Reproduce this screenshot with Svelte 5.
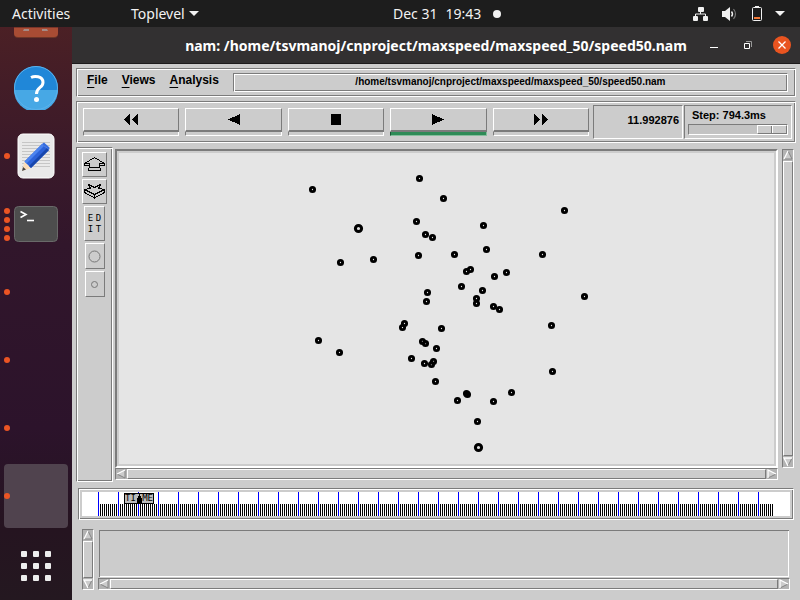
<script>
  const controls = [
    { label: 'Fast rewind', d: 'M0 5.5L6 0V11ZM8 5.5L14 0V11Z', w: 14 },
    { label: 'Play backward', d: 'M0 5.5L12 0V11Z', w: 12 },
    { label: 'Stop', d: 'M0 0H10V11H0Z', w: 10 },
    { label: 'Play forward', d: 'M12 5.5L0 0V11Z', w: 12, active: true },
    { label: 'Fast forward', d: 'M6 5.5L0 0V11ZM14 5.5L8 0V11Z', w: 14 }
  ];

  // Node positions on the simulation canvas: x, y
  const nodes = [
    [193, 36], [300, 25], [324, 45], [297, 68], [306, 81], [313, 84], [221, 109], [254, 106],
    [299, 102], [364, 72], [445, 57], [335, 101], [367, 96], [423, 101], [351, 116], [347, 118],
    [387, 119], [375, 123], [342, 133], [363, 137], [357, 145], [357, 150], [374, 153], [380, 156],
    [465, 143], [432, 172], [308, 139], [307, 148], [285, 170], [283, 174], [322, 175], [303, 188],
    [306, 190], [317, 195], [292, 205], [305, 210], [314, 208], [312, 211], [316, 228], [199, 187],
    [220, 199], [338, 247], [347, 240], [348, 241], [374, 248], [392, 239], [433, 218], [358, 268]
  ];
  const bigNodes = [[239, 75], [359, 294]];

  const majorTicks = Array.from({ length: 34 }, (_, i) => i * 20);
  let step = $state(100);
  const arrows = {
    up: ['M5 1L1 9', 'M5 1L9 9H1', 'M5 1L9 9H1Z'],
    down: ['M5 9L1 1H9', 'M9 1L5 9', 'M5 9L1 1H9Z'],
    left: ['M9 1L1 5', 'M1 5L9 9V1', 'M1 5L9 1V9Z'],
    right: ['M1 9V1L9 5', 'M9 5L1 9', 'M9 5L1 1V9Z']
  };
</script>

{#snippet arrow(dir)}
  <button class="arrow" aria-label="Scroll {dir}">
    <svg width="10" height="10" viewBox="0 0 10 10">
      <path d={arrows[dir][2]} fill="#ccc" />
      <path d={arrows[dir][1]} fill="none" stroke="#858585" />
      <path d={arrows[dir][0]} fill="none" stroke="#fff" stroke-width="1.3" />
    </svg>
  </button>
{/snippet}

{#snippet vscroll()}
  <div class="scroll vertical">{@render arrow('up')}<div class="thumb"></div>{@render arrow('down')}</div>
{/snippet}

{#snippet hscroll()}
  <div class="scroll">{@render arrow('left')}<div class="thumb"></div>{@render arrow('right')}</div>
{/snippet}

<div class="desktop">
  <header class="topbar">
    <button class="activities">Activities</button>
    <button class="appmenu">Toplevel
      <svg width="10" height="5" viewBox="0 0 10 5"><path d="M0 0H10L5 5Z" fill="#f2f2f2" /></svg>
    </button>
    <button class="clock"><span>Dec 31</span><span>19:43</span><i></i></button>
    <button class="status" aria-label="System menu">
      <svg width="16" height="14" viewBox="0 0 16 14" fill="#f2f2f2">
        <rect x="5" width="6" height="5" rx="1" /><rect y="9" width="5" height="5" rx="1" /><rect x="10" y="9" width="5" height="5" rx="1" />
        <path d="M7.5 4V7M2.5 10V7H12.5V10" fill="none" stroke="#f2f2f2" />
      </svg>
      <svg class="speaker" width="16" height="14" viewBox="0 0 16 14">
        <path d="M1 4H4L9 0V14L4 10H1Z" fill="#f2f2f2" />
        <path d="M10.500 4.500Q12.500 7 10.500 9.500" fill="none" stroke="#f2f2f2" stroke-width="1.400" />
        <path d="M12.500 2Q16.500 7 12.500 12" fill="none" stroke="#777" stroke-width="1.200" />
      </svg>
      <svg class="battery" width="10" height="15" viewBox="0 0 10 15">
        <path d="M3 0H7V2H3Z" fill="#f2f2f2" /><rect x=".5" y="1.5" width="9" height="13" rx="1" fill="none" stroke="#f2f2f2" />
        <path d="M2 11H8V13H2Z" fill="#f47836" />
      </svg>
      <svg width="10" height="5" viewBox="0 0 10 5"><path d="M0 0H10L5 5Z" fill="#f2f2f2" /></svg>
    </button>
  </header>

  <div class="body">
    <nav class="dock" aria-label="Dock">
      <button class="app first" aria-label="Software">
        <svg width="44" height="11" viewBox="0 0 44 11">
          <path d="M0 0H44V7Q44 11 40 11H4Q0 11 0 7Z" fill="#6e3527" /><path d="M0 0H44V6Q44 10 40 10H4Q0 10 0 6Z" fill="#a84c34" />
          <path d="M0 0H44V1H0Z" fill="#7c3529" /><path d="M10 2H15V4H9ZM28 2H33L34 4H28Z" fill="#a68a86" />
        </svg>
      </button>
      <button class="app" aria-label="Help">
        <svg width="44" height="44" viewBox="0 0 44 44">
          <circle cx="22" cy="22" r="22" fill="#2087d8" /><path d="M0 24H44A22 22 0 0 1 0 24Z" fill="#47a8e5" />
          <circle cx="22" cy="22" r="21.5" fill="none" stroke="#5cb2eb" />
          <path d="M17 11.5C20 10 29 9.500 29 16.500C29 22 22.500 21 22.500 28" fill="none" stroke="#fff" stroke-width="3" />
          <circle cx="22.500" cy="33.500" r="2.500" fill="#fff" />
        </svg>
      </button>
      <button class="app" aria-label="Text Editor">
        <span class="marks"><i></i></span>
        <svg width="38" height="46" viewBox="0 0 38 46">
          <rect x="1" y="1" width="36" height="44" rx="5" fill="#e9e9e9" stroke="#fff" />
          <path d="M5 9.500H33M5 12.500H33M5 15.500H33M5 18.500H33M5 21.500H33M5 24.500H33M5 27.500H33M5 30.500H33M5 33.500H33" stroke="#c6c6c6" />
          <path d="M5 38L7.500 28.500L14 35Z" fill="#fbdcb9" /><path d="M5 38L6 34L9 36.500Z" fill="#444" />
          <path d="M7.500 28.500L25 11L32 17L14 35Z" fill="#2b61d8" /><path d="M7.500 28.500L25 11L27 13L9.500 30.500Z" fill="#4b83ef" /><path d="M12 33L30 15L32 17L14 35Z" fill="#1746ad" />
          <path d="M25 11L27 9.500L32.500 14.500L32 17Z" fill="#356ce0" />
        </svg>
      </button>
      <button class="app" aria-label="Terminal">
        <span class="marks"><i></i><i></i><i></i><i></i></span>
        <svg width="44" height="36" viewBox="0 0 44 36">
          <rect x=".5" y=".5" width="43" height="35" rx="4" fill="#4d4d4d" stroke="#696969" />
          <path d="M6.500 5.500L12 8.500L6.500 11.500" fill="none" stroke="#fff" stroke-width="1.600" /><path d="M13 14.500H20" stroke="#fff" stroke-width="1.600" />
        </svg>
      </button>
      <button class="app" aria-label="Window 1"><span class="marks"><i></i></span></button>
      <button class="app" aria-label="Window 2"><span class="marks"><i></i></span></button>
      <button class="app" aria-label="Window 3"><span class="marks"><i></i></span></button>
      <button class="app focused" aria-label="nam"><span class="marks"><i></i></span></button>
      <button class="app grid" aria-label="Show Applications">
        <svg width="30" height="30" viewBox="0 0 30 30" fill="#eee">
          {#each [0, 12, 24] as y}{#each [0, 12, 24] as x}<rect {x} {y} width="6" height="6" rx="1" />{/each}{/each}
        </svg>
      </button>
    </nav>

    <section class="window">
      <div class="titlebar">
        <h1>nam: /home/tsvmanoj/cnproject/maxspeed/maxspeed_50/speed50.nam</h1>
        <div class="winbuttons">
          <button aria-label="Minimize"><svg width="8" height="8" viewBox="0 0 8 8"><path d="M0 6.500H8" stroke="#fff" /></svg></button>
          <button aria-label="Restore"><svg width="8" height="8" viewBox="0 0 8 8" fill="none"><path d="M2 .5H7.500V6" stroke="#999" /><path d="M.5 2.500H5.500V7.500H.5Z" stroke="#fff" /></svg></button>
          <button class="close" aria-label="Close"><svg width="8" height="8" viewBox="0 0 8 8"><path d="M.5 .5L7.500 7.500M7.500 .5L.5 7.500" stroke="#fff" stroke-width="1.300" /></svg></button>
        </div>
      </div>

      <main>
        <div class="menubar groove">
          <button class="menu"><u>F</u>ile</button>
          <button class="menu"><u>V</u>iews</button>
          <button class="menu"><u>A</u>nalysis</button>
          <div class="path groove">/home/tsvmanoj/cnproject/maxspeed/maxspeed_50/speed50.nam</div>
        </div>

        <div class="toolbar groove">
          <div class="controls">
            {#each controls as c}
              <button class="control" aria-label={c.label}>
                <span class="face"><svg width={c.w} height="11" viewBox="0 0 {c.w} 11" shape-rendering="crispEdges"><path d={c.d} /></svg></span>
                <span class="lamp" class:on={c.active}></span>
              </button>
            {/each}
          </div>
          <output class="time sunken">11.992876</output>
          <div class="step sunken">
            <label for="step">Step: 794.3ms</label>
            <input id="step" type="range" bind:value={step} />
          </div>
        </div>

        <div class="workspace">
          <div class="tools groove">
            <button class="tool wide" aria-label="Zoom in">
              <svg width="21" height="15" viewBox="0 0 21 15" fill="none" stroke="#000" shape-rendering="crispEdges">
                <path d="M10.500 .5L.5 6.500V8.500H5.500M10.500 .5L20.500 6.500V8.500H15.500M.5 6.500H5.500V10.500H15.500V6.500H20.500M5.500 10.500L4.500 11.500V13.500H16.500V11.500L15.500 10.500" />
              </svg>
            </button>
            <button class="tool wide" aria-label="Zoom out">
              <svg width="21" height="15" viewBox="0 0 21 15" fill="none" stroke="#000" shape-rendering="crispEdges">
                <path d="M4.500 .5L6.500 4.500L.5 5.500L10.500 10.500L20.500 5.500L14.500 4.500L16.500 .5L10.500 3.500ZM.5 5.500V8.500L10.500 14L20.500 8.500V5.500M10.500 10.500V14.500" />
              </svg>
            </button>
            <button class="tool edit" aria-label="Edit"><span>E</span><span>D</span><span>I</span><span>T</span></button>
            <button class="tool" aria-label="Larger nodes"><svg width="13" height="13"><circle cx="6.500" cy="6.500" r="5.500" fill="none" stroke="#777" /></svg></button>
            <button class="tool" aria-label="Smaller nodes"><svg width="7" height="7"><circle cx="3.500" cy="3.500" r="3" fill="none" stroke="#777" /></svg></button>
          </div>
          <div class="viewport">
            <div class="canvas">
              <svg width="100%" height="100%" role="img" aria-label="Network nodes">
                {#each nodes as [x, y]}
                  <g transform="translate({x} {y})"><circle cx=".5" cy=".5" r="2.100" fill="none" stroke="#000" stroke-width="2.900" /></g>
                {/each}
                {#each bigNodes as [x, y]}
                  <g transform="translate({x} {y})"><circle cx=".5" cy=".5" r="3.100" fill="#ddd" stroke="#000" stroke-width="3" /></g>
                {/each}
              </svg>
            </div>
            {@render vscroll()}
            {@render hscroll()}
          </div>
        </div>

        <div class="timeline groove">
          <div class="ruler">
            <div class="minor"></div>
            {#each majorTicks as x}<div class="major" style:left="{x + 16}px"></div>{/each}
            <button class="marker" aria-label="TIME">
              <span>TI</span>
              <svg width="5" height="9" viewBox="0 0 5 9" shape-rendering="crispEdges"><path d="M2 0H3V2H4V4H5V9H0V4H1V2H2Z" /></svg>
              <span>ME</span>
            </button>
          </div>
        </div>

        <div class="notes">
          {@render vscroll()}
          <div class="notepane">
            <textarea readonly aria-label="Annotations"></textarea>
            {@render hscroll()}
          </div>
        </div>
      </main>
    </section>
  </div>
</div>

<style>
  :global(body) { margin: 0; }
  .desktop { display: flex; flex-direction: column; height: 100vh; min-height: 500px; overflow: hidden; font-family: "Liberation Sans", Arial, sans-serif; }
  .desktop * { box-sizing: border-box; }
  button { appearance: none; margin: 0; padding: 0; border: 0; background: none; color: inherit; font: inherit; }
  svg { display: block; flex: none; }

  .topbar { display: flex; flex: none; align-items: center; height: 27px; padding: 0 15px 0 12px; background: #1d1d1d; color: #f2f2f2; font: 14px "Noto Sans", sans-serif; }
  .topbar button { display: flex; align-items: center; }
  .activities { width: 119px; }
  .appmenu { gap: 4px; width: 262px; }
  .clock { gap: 8px; }
  .clock i { width: 8px; height: 8px; margin-left: 4px; border-radius: 50%; background: #f2f2f2; }
  .status { margin-left: auto; }
  .speaker { margin: 0 15px 0 12px; }
  .battery { margin-right: 13px; }

  .body { display: flex; flex: 1; min-height: 0; }
  .dock { display: flex; flex: none; flex-direction: column; gap: 4px; width: 72px; padding: 0 4px; overflow: hidden; background: linear-gradient(#4b2025, #3c1a29 20%, #31162b 38%, #2c132b 70%, #251420 88%, #241820); }
  .app { position: relative; display: flex; flex: none; align-items: center; justify-content: center; height: 64px; border-radius: 4px; }
  .app.first { align-items: flex-start; height: 25px; }
  .app.grid { height: 68px; }
  .app.focused { background: #50434e; }
  .marks { position: absolute; left: 0; top: 0; bottom: 0; display: flex; flex-direction: column; justify-content: center; gap: 3px; }
  .marks i { width: 6px; height: 6px; border-radius: 50%; background: #eb5424; }

  .window { display: flex; flex: 1; flex-direction: column; min-width: 0; background: #ccc; }
  .titlebar { position: relative; display: flex; flex: none; align-items: center; justify-content: center; height: 37px; border-bottom: 1px solid #1c1a1b; background: #323031; color: #fff; }
  h1 { margin: 0; font: bold 14px "Noto Sans", sans-serif; white-space: nowrap; }
  .winbuttons { position: absolute; right: 9px; top: 9px; display: flex; align-items: center; gap: 8px; }
  .winbuttons button { display: flex; align-items: center; justify-content: center; width: 26px; height: 18px; }
  .winbuttons .close { width: 18px; margin-left: 4px; border-radius: 50%; background: #e95420; }

  main { display: flex; flex: 1; flex-direction: column; gap: 4px; min-height: 0; padding: 4px 4px 10px; }
  .groove { border: 1px solid; border-color: #7b7b7b #fff #fff #7b7b7b; box-shadow: inset 1px 1px #fff, inset -1px -1px #7b7b7b; }
  .sunken { border: 1px solid; border-color: #7b7b7b #fff #fff #7b7b7b; }

  .menubar { display: flex; flex: none; height: 29px; padding: 4px 7px 4px 10px; }
  .menu { margin-right: 14px; height: 15px; font-size: 12px; font-weight: bold; line-height: 15px; }
  .menu u { text-underline-offset: 3px; }
  .path { flex: 1; height: 19px; font-size: 10px; font-weight: bold; line-height: 15px; text-align: center; }

  .toolbar { display: flex; flex: none; height: 42px; padding: 3px; }
  .controls { display: flex; flex: 1; gap: 6px; padding: 3px 4px 0 3px; }
  .control { display: flex; flex: 1; flex-direction: column; height: 28px; }
  .face { display: flex; align-items: center; justify-content: center; width: 100%; height: 24px; border: 1px solid; border-width: 1px 1px 2px; border-color: #fff #7b7b7b #7b7b7b #fff; }
  .lamp { width: 100%; height: 4px; border: 1px solid; border-width: 0 1px 1px; border-color: #fff #fff #fff #7b7b7b; }
  .lamp.on { background: #2e8b57; border-color: #1c5435 #85bd9c #85bd9c #1c5435; }
  .time { width: 90px; margin-right: 1px; padding-right: 3px; font-size: 11px; font-weight: bold; line-height: 29px; text-align: right; }
  .step { display: flex; flex-direction: column; gap: 2px; width: 108px; padding: 3px 3px 2px; font-size: 11px; font-weight: bold; }
  .step label { padding-left: 4px; line-height: 13px; }
  .step input { appearance: none; width: 100%; height: 11px; margin: 0; border: 1px solid; border-color: #7b7b7b #fff #fff #7b7b7b; background: #c3c3c3; }
  .step input::-webkit-slider-thumb { appearance: none; width: 30px; height: 9px; border: 1px solid; border-color: #fff #7b7b7b #7b7b7b #fff; background: linear-gradient(90deg, #ccc 13px, #7b7b7b 13px 14px, #fff 14px 15px, #ccc 15px); }

  .workspace { display: flex; flex: 1; gap: 2px; min-height: 0; padding-right: 2px; }
  .tools { display: flex; flex: none; flex-direction: column; align-items: center; gap: 2px; width: 37px; padding-top: 4px; }
  .tool { display: flex; align-items: center; justify-content: center; width: 20px; height: 26px; border: 1px solid; border-color: #fff #7b7b7b #7b7b7b #fff; }
  .tool.wide { width: 25px; height: 25px; }
  .tool.edit { display: grid; grid-template-columns: 8px 8px; grid-template-rows: 11px 11px; place-content: center; width: 21px; height: 35px; font: 9px/11px "DejaVu Sans Mono", monospace; }
  .viewport { display: grid; flex: 1; grid-template-columns: minmax(0, 1fr) 12px; grid-template-rows: minmax(0, 1fr) 12px; column-gap: 4px; min-width: 0; padding: 2px 0; }
  .canvas { overflow: hidden; padding: 2px; border: 2px solid; border-color: #7b7b7b #fff #fff #7b7b7b; background: linear-gradient(#e5e5e5, #e5e5e5) content-box #ccc; }

  .scroll { display: flex; border: 1px solid; border-color: #7b7b7b #fff #fff #7b7b7b; background: #b3b3b3; }
  .scroll.vertical { flex-direction: column; width: 12px; }
  .thumb { flex: 1; margin: 0 1px; border: 1px solid; border-color: #fff #7b7b7b #7b7b7b #fff; background: #ccc; }
  .vertical .thumb { margin: 1px 0; }
  .arrow { flex: none; width: 10px; height: 10px; }

  .timeline { flex: none; height: 32px; margin: 2px 2px 0; padding: 3px; }
  .ruler { position: relative; height: 24px; background: #fff; }
  .minor { position: absolute; left: 16px; right: 17px; bottom: 0; height: 12px; background: repeating-linear-gradient(90deg, #000 0 1px, #fff 1px 2px); }
  .major { position: absolute; top: 0; width: 1px; height: 24px; background: #00f; }
  .marker { position: absolute; left: 42px; top: 1px; display: flex; align-items: center; justify-content: space-between; width: 30px; height: 11px; padding: 0; border: 1px solid #000; background: #bbb; font: 9px/9px "DejaVu Sans Mono", monospace; }

  .notes { display: flex; flex: none; gap: 4px; height: 61px; margin-top: 5px; padding: 0 6px; }
  .notepane { display: flex; flex: 1; flex-direction: column; min-width: 0; }
  textarea { flex: 1; min-height: 0; border: 1px solid #ccc; border-radius: 0; background: #ccc; box-shadow: inset 1px 1px #7b7b7b, inset -1px -1px #fff; resize: none; outline: 0; }
  .notepane .scroll { flex: none; height: 12px; }
</style>
